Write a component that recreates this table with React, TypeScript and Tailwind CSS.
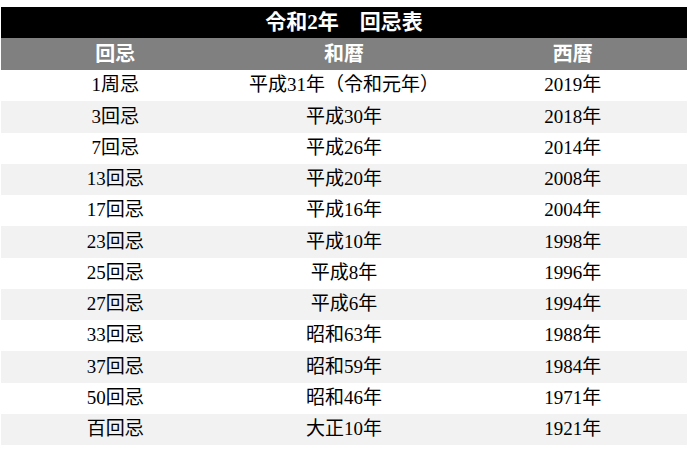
const rows = [
  ["1周忌", "平成31年（令和元年）", "2019年"],
  ["3回忌", "平成30年", "2018年"],
  ["7回忌", "平成26年", "2014年"],
  ["13回忌", "平成20年", "2008年"],
  ["17回忌", "平成16年", "2004年"],
  ["23回忌", "平成10年", "1998年"],
  ["25回忌", "平成8年", "1996年"],
  ["27回忌", "平成6年", "1994年"],
  ["33回忌", "昭和63年", "1988年"],
  ["37回忌", "昭和59年", "1984年"],
  ["50回忌", "昭和46年", "1971年"],
  ["百回忌", "大正10年", "1921年"],
];

export default function App() {
  return (
    <div
      className="w-[688px] h-[452px] bg-white pt-[7px] px-[1px] text-black"
      style={{ fontFamily: '"Liberation Serif", "Noto Sans CJK JP", serif' }}
    >
      <div className="w-[686px]">
        {/* Title */}
        <div className="h-[31px] bg-black text-white text-[21px] font-bold flex items-center justify-center">
          令和2年　回忌表
        </div>

        {/* Header */}
        <div className="h-[32px] bg-[#808080] text-white text-[20px] font-bold grid grid-cols-3 items-center text-center">
          <div>回忌</div>
          <div>和暦</div>
          <div>西暦</div>
        </div>

        {/* Rows */}
        {rows.map((r, i) => (
          <div
            key={r[0]}
            className={
              "h-[31.25px] grid grid-cols-3 items-center text-center text-[19px] " +
              (i % 2 === 1 ? "bg-[#f2f2f2]" : "bg-white")
            }
          >
            <div>{r[0]}</div>
            <div>{r[1]}</div>
            <div>{r[2]}</div>
          </div>
        ))}
      </div>
    </div>
  );
}
